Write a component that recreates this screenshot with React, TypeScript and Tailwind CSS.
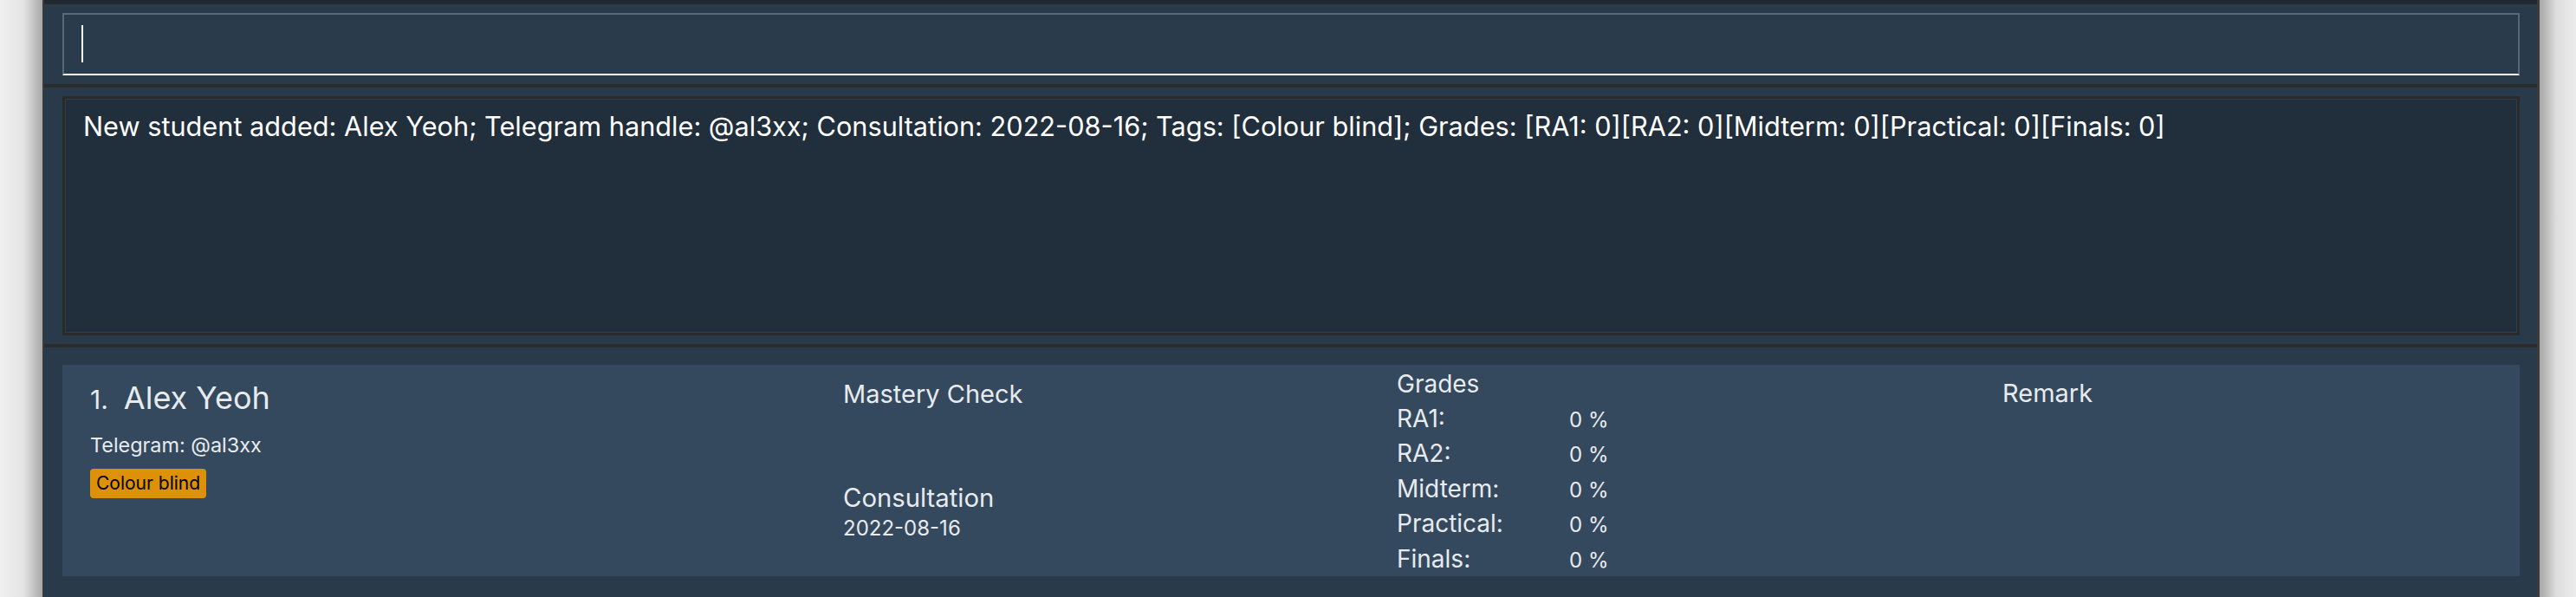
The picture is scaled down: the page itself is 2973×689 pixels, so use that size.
export default function App() {
  const grades = [
    { label: "RA1:", value: "0 %" },
    { label: "RA2:", value: "0 %" },
    { label: "Midterm:", value: "0 %" },
    { label: "Practical:", value: "0 %" },
    { label: "Finals:", value: "0 %" },
  ];

  return (
    <div className="flex h-[689px] w-[2973px] overflow-hidden font-['Inter','Liberation_Sans',sans-serif]">
      <div className="w-[49px] shrink-0 bg-[linear-gradient(to_right,#f0f0f0_0%,#e4e4e4_55%,#a8a8a8_100%)]" />
      <div className="w-[2px] shrink-0 bg-[#3a3a3a]" />

      {/* window */}
      <div className="flex min-w-0 flex-1 flex-col bg-[#293a4b]">
        <div className="h-[5px] border-b border-[#2d2b29] bg-[#1f2833]" />

        {/* command box */}
        <div className="h-[92px] pl-[21px] pr-[20px] pt-[10px]">
          <div className="h-[72px] border-2 border-[#56697c] border-b-white bg-[#2a3b4c] pl-[20px] pt-[12px]">
            <div className="h-[43px] w-[2px] bg-white" />
          </div>
        </div>

        <div className="h-[4px] bg-[#2b2b2b]" />

        {/* result display */}
        <div className="h-[296px] pl-[21px] pr-[20px] pt-[10px]">
          <div className="h-[276px] border-[3px] border-[#2a2a2a]">
            <div className="h-full border border-[#2c3d4f] bg-[#212e3c] pl-[20px] pt-[11px]">
              <p className="whitespace-nowrap text-[30.7px] leading-[40px] text-white">
                New student added: Alex Yeoh; Telegram handle: @al3xx; Consultation: 2022-08-16; Tags: [Colour blind]; Grades: [RA1: 0][RA2: 0][Midterm: 0][Practical: 0][Finals: 0]
              </p>
            </div>
          </div>
        </div>

        <div className="h-[4px] bg-[#2b2b2b]" />

        {/* student list */}
        <div className="flex-1 pl-[21px] pr-[20px] pt-[20px]">
          <div className="grid h-[244px] grid-cols-[869px_639px_699px_1fr] bg-[#34495e] pl-[32px] text-[#e8ebee]">
            <div className="pt-[16px]">
              <div className="flex items-baseline gap-[18px] leading-[44px]">
                <span className="text-[30px]">1.</span>
                <span className="text-[36px]">Alex Yeoh</span>
              </div>
              <div className="mt-[16px] text-[23.4px] leading-[30px]">Telegram: @al3xx</div>
              <div className="mt-[12px] flex">
                <span className="h-[34px] rounded-[4px] bg-[#dd9108] px-[7px] text-[21px] leading-[34px] text-black">
                  Colour blind
                </span>
              </div>
            </div>

            <div className="pt-[15px]">
              <div className="text-[29px] leading-[38px]">Mastery Check</div>
              <div className="mt-[82px] text-[29.3px] leading-[38px]">Consultation</div>
              <div className="mt-[1px] text-[24px] leading-[30px]">2022-08-16</div>
            </div>

            <div className="pt-[3px]">
              <div className="text-[28px] leading-[39.6px]">Grades</div>
              {grades.map((g) => (
                <div key={g.label} className="grid grid-cols-[199px_1fr] items-baseline leading-[39.6px]">
                  <span className="text-[28px]">{g.label}</span>
                  <span className="text-[24px]">{g.value}</span>
                </div>
              ))}
            </div>

            <div className="pt-[14px]">
              <div className="text-[29px] leading-[38px]">Remark</div>
            </div>
          </div>
        </div>
      </div>

      <div className="w-[3px] shrink-0 bg-[#3a3a3a]" />
      <div className="w-[42px] shrink-0 bg-[linear-gradient(to_right,#a6a6a6_0%,#dcdcdc_45%,#ececec_100%)]" />
    </div>
  );
}
